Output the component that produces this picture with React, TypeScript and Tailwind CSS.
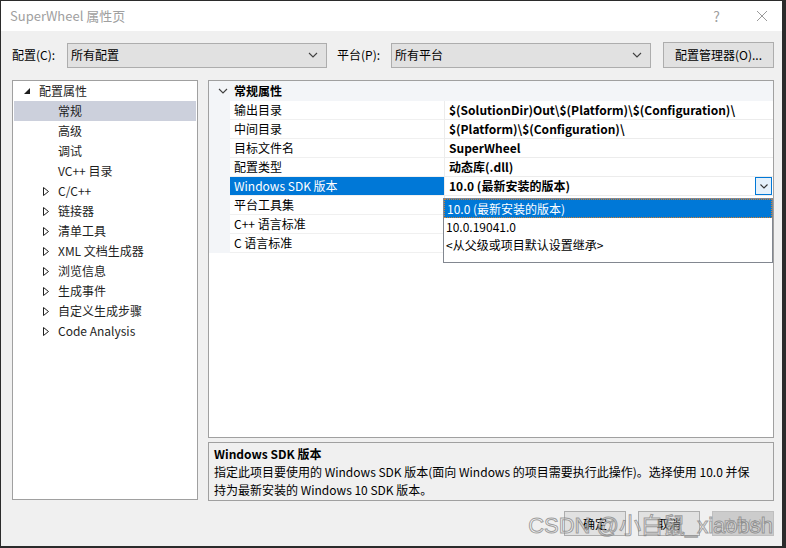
import React from 'react';

const UI_FONT = "font-['Noto_Sans_CJK_SC','Noto_Sans',sans-serif]";

type TreeItem = { label: string; level: 0 | 1; arrow: 'open' | 'closed' | 'none'; selected?: boolean };

const treeItems: TreeItem[] = [
  { label: '配置属性', level: 0, arrow: 'open' },
  { label: '常规', level: 1, arrow: 'none', selected: true },
  { label: '高级', level: 1, arrow: 'none' },
  { label: '调试', level: 1, arrow: 'none' },
  { label: 'VC++ 目录', level: 1, arrow: 'none' },
  { label: 'C/C++', level: 1, arrow: 'closed' },
  { label: '链接器', level: 1, arrow: 'closed' },
  { label: '清单工具', level: 1, arrow: 'closed' },
  { label: 'XML 文档生成器', level: 1, arrow: 'closed' },
  { label: '浏览信息', level: 1, arrow: 'closed' },
  { label: '生成事件', level: 1, arrow: 'closed' },
  { label: '自定义生成步骤', level: 1, arrow: 'closed' },
  { label: 'Code Analysis', level: 1, arrow: 'closed' },
];

// property rows of the grid
const props: { name: string; value: string; selected?: boolean }[] = [
  { name: '输出目录', value: '$(SolutionDir)Out\\$(Platform)\\$(Configuration)\\' },
  { name: '中间目录', value: '$(Platform)\\$(Configuration)\\' },
  { name: '目标文件名', value: 'SuperWheel' },
  { name: '配置类型', value: '动态库(.dll)' },
  { name: 'Windows SDK 版本', value: '10.0 (最新安装的版本)', selected: true },
  { name: '平台工具集', value: '' },
  { name: 'C++ 语言标准', value: '' },
  { name: 'C 语言标准', value: '' },
];

const Chevron = ({ className = '' }: { className?: string }) => (
  <svg width="10" height="6" viewBox="0 0 10 6" className={className}>
    <polyline points="1,1 5,5 9,1" fill="none" stroke="currentColor" strokeWidth="1.1" />
  </svg>
);

const Combo = ({ text, width }: { text: string; width: string }) => (
  <div className={`${width} h-[25px] border border-[#adadad] bg-[#e1e1e1] flex items-center pl-[3px] pr-[8px] text-[12px] text-black`}>
    <span className="flex-1">{text}</span>
    <Chevron className="text-[#404040]" />
  </div>
);

const TreeArrow = ({ kind }: { kind: TreeItem['arrow'] }) => {
  if (kind === 'open') {
    return (
      <svg width="7" height="7" viewBox="0 0 7 7">
        <polygon points="6,0 6,6 0,6" fill="#1e1e1e" />
      </svg>
    );
  }
  if (kind === 'closed') {
    return (
      <svg width="6" height="9" viewBox="0 0 6 9">
        <polygon points="0.5,0.5 5.5,4.5 0.5,8.5" fill="none" stroke="#1e1e1e" strokeWidth="1" />
      </svg>
    );
  }
  return null;
};

export default function App() {
  return (
    <div className={`w-[786px] h-[548px] bg-[#2b2b2b] pt-px pl-px ${UI_FONT}`}>
      <div className="w-[781px] h-[545px] bg-[#f0f0f0] flex flex-col relative">
        {/* Title bar */}
        <div className="h-[30px] bg-white flex items-center pl-[9px] pr-[14px] shrink-0">
          <span className="text-[13px] text-[#a0a0a0] flex-1">SuperWheel 属性页</span>
          <span className="text-[14px] text-[#a0a0a0] mr-[36px]">?</span>
          <svg width="12" height="12" viewBox="0 0 12 12">
            <path d="M1 1 L11 11 M11 1 L1 11" stroke="#9a9a9a" strokeWidth="1" />
          </svg>
        </div>

        {/* Config row */}
        <div className="mt-[11px] h-[26px] flex items-center pl-[11px] pr-[8px] text-[12px] text-black">
          <span className="w-[55px]">配置(C):</span>
          <Combo text="所有配置" width="w-[260px]" />
          <span className="ml-[10px] w-[54px]">平台(P):</span>
          <Combo text="所有平台" width="w-[260px]" />
          <div className="ml-[12px] w-[111px] h-[26px] border border-[#adadad] bg-[#e1e1e1] flex items-center justify-center">
            配置管理器(O)...
          </div>
        </div>

        {/* Main area */}
        <div className="mt-[12px] flex gap-[10px] pl-[11px] pr-[8px]">
          {/* Tree */}
          <div className="w-[186px] h-[420px] border border-[#a0a0a0] bg-white px-px">
            {treeItems.map((item) => (
              <div
                key={item.label}
                className={`h-[20px] flex items-center text-[12px] text-[#1e1e1e] ${item.selected ? 'bg-[#ccd0dc]' : ''}`}
              >
                <div className={`flex items-center justify-center w-[8px] ${item.level === 0 ? 'ml-[9px] mr-[8px]' : 'ml-[28px] mr-[8px]'}`}>
                  <TreeArrow kind={item.arrow} />
                </div>
                <span>{item.label}</span>
              </div>
            ))}
          </div>

          {/* Right column */}
          <div className="w-[566px] flex flex-col gap-[4px]">
            {/* Property grid */}
            <div className="h-[358px] border border-[#a0a0a0] bg-white relative">
              <div className="h-[20px] bg-[#f3f5f8] flex items-center text-[12px] font-bold text-black">
                <div className="w-[25px] flex justify-center pl-[3px]">
                  <Chevron className="text-[#404040]" />
                </div>
                <span>常规属性</span>
              </div>
              {props.map((p) => (
                <div key={p.name} className="h-[19px] flex text-[12px]">
                  <div className="w-[21px] bg-[#f3f5f8]" />
                  <div
                    className={`w-[214px] flex items-center pl-[4px] border-b border-[#f0f0f0] ${
                      p.selected ? 'bg-[#0078d7] text-white border-[#0078d7]' : 'text-black'
                    }`}
                  >
                    {p.name}
                  </div>
                  <div className="flex-1 flex items-center pl-[4px] pr-px border-l border-b border-[#ececec] font-bold text-black">
                    <span className="flex-1 whitespace-nowrap">{p.value}</span>
                    {p.selected && (
                      <div className="w-[17px] h-[18px] border border-[#0078d7] bg-[#e5f1fb] flex items-center justify-center">
                        <svg width="8" height="5" viewBox="0 0 8 5">
                          <polyline points="0.5,0.5 4,4 7.5,0.5" fill="none" stroke="#333" strokeWidth="1.1" />
                        </svg>
                      </div>
                    )}
                  </div>
                </div>
              ))}

              {/* Open drop-down list */}
              <div className="absolute left-[234px] top-[117px] w-[330px] h-[65px] border border-[#828790] bg-white text-[12px] text-black">
                <div className="h-[19px] bg-[#0078d7] text-white flex items-center pl-[2px] border border-dotted border-[#d08030]">
                  10.0 (最新安装的版本)
                </div>
                <div className="h-[18px] flex items-center pl-[2px]">10.0.19041.0</div>
                <div className="h-[18px] flex items-center pl-[2px]">&lt;从父级或项目默认设置继承&gt;</div>
              </div>
            </div>

            {/* Description */}
            <div className="h-[59px] border border-[#a0a0a0] bg-[#f0f0f0] px-[5px] pt-[2px] text-[12px] text-black leading-[18px]">
              <div className="font-bold">Windows SDK 版本</div>
              <div className="whitespace-nowrap">
                指定此项目要使用的 Windows SDK 版本(面向 Windows 的项目需要执行此操作)。选择使用 10.0 并保
              </div>
              <div className="whitespace-nowrap">持为最新安装的 Windows 10 SDK 版本。</div>
            </div>
          </div>
        </div>

        {/* Buttons */}
        <div className="mt-[10px] flex justify-end gap-[12px] pr-[8px] text-[12px] relative">
          <div className="w-[62px] h-[25px] border border-[#adadad] bg-[#e1e1e1] flex items-center justify-center text-black">确定</div>
          <div className="w-[62px] h-[25px] border border-[#adadad] bg-[#e1e1e1] flex items-center justify-center text-black">取消</div>
          <div className="w-[62px] h-[25px] border border-[#bfbfbf] bg-[#cccccc] flex items-center justify-center text-[#a0a0a0]">应用(A)</div>
          {/* watermark */}
          <div className="absolute right-[9px] top-[2px] text-[22px] leading-[26px] text-white/40 [-webkit-text-stroke:1px_rgba(120,120,120,0.7)] font-['Liberation_Sans','Noto_Sans_CJK_SC',sans-serif] whitespace-nowrap pointer-events-none">
            CSDN @小白鼠_xiaobsh
          </div>
        </div>
      </div>
    </div>
  );
}
